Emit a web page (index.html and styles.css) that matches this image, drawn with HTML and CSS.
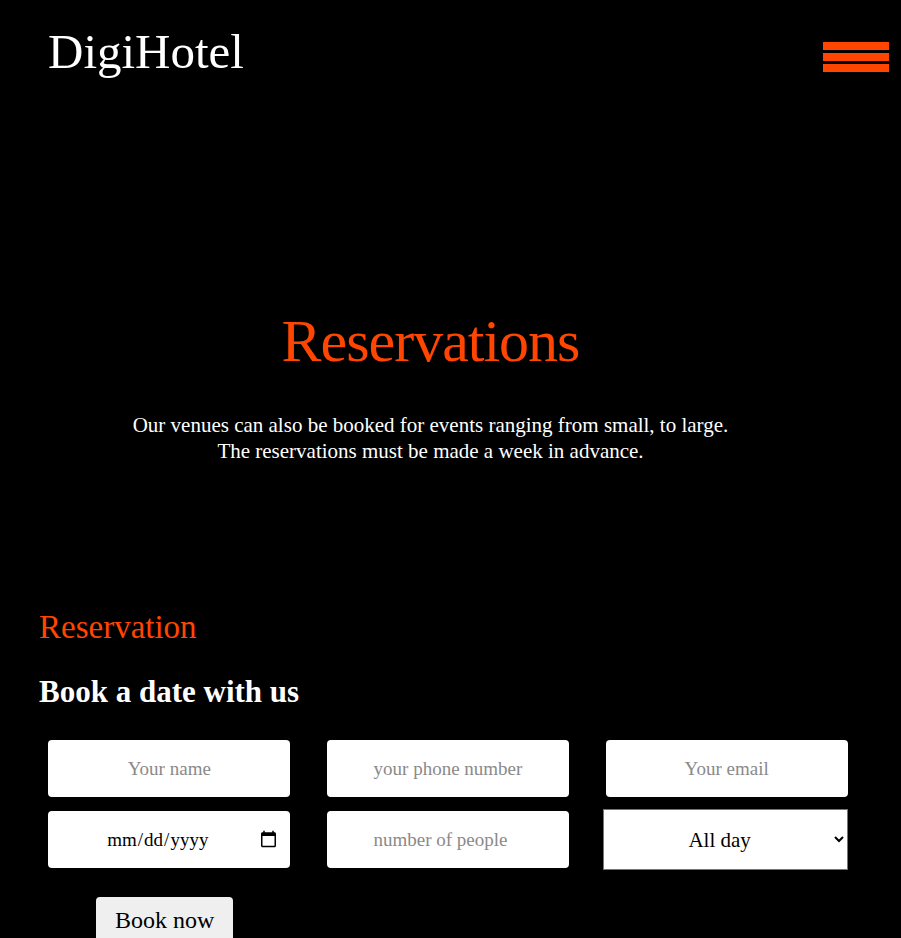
FILE: index.html
```html
<!DOCTYPE html>
<html lang="en">
<head>
<meta charset="utf-8">
<title>DigiHotel - Reservations</title>
<link rel="stylesheet" href="styles.css">
</head>
<body>
<header class="site-header">
  <div class="logo">DigiHotel</div>
  <button class="menu-toggle" aria-label="Menu">
    <span class="bar"></span>
    <span class="bar"></span>
    <span class="bar"></span>
  </button>
</header>

<section class="hero">
  <h1 class="hero-title">Reservations</h1>
  <p class="hero-text">Our venues can also be booked for events ranging from small, to large.<br>The reservations must be made a week in advance.</p>
</section>

<section class="reservation">
  <h2 class="section-label">Reservation</h2>
  <h3 class="section-title">Book a date with us</h3>
  <form class="booking-form">
    <div class="form-grid">
      <input class="field" type="text" placeholder="Your name">
      <input class="field" type="tel" placeholder="your phone number">
      <input class="field" type="email" placeholder="Your email">
      <input class="field" type="date">
      <input class="field" type="number" placeholder="number of people">
      <select class="field field-select">
        <option>All day</option>
        <option>Morning</option>
        <option>Evening</option>
      </select>
    </div>
    <div class="form-actions">
      <button class="book-btn" type="button">Book now</button>
    </div>
  </form>
</section>
</body>
</html>
```

FILE: styles.css
```css
html, body {
  margin: 0;
  padding: 0;
  background: #000;
  color: #fff;
  font-family: "Liberation Serif", "Times New Roman", serif;
}

.site-header {
  display: flex;
  align-items: flex-start;
  padding: 28px 12px 0 48px;
  height: 47px;
}

.logo {
  font-size: 49px;
  line-height: 48px;
  color: #fff;
}

.menu-toggle {
  margin-left: auto;
  margin-top: 14px;
  padding: 0;
  border: 0;
  background: transparent;
  display: flex;
  flex-direction: column;
  gap: 3px;
  cursor: pointer;
}

.bar {
  display: block;
  width: 66px;
  height: 8px;
  background: #ff4500;
}

.hero {
  padding: 232px 40px 0 0;
  text-align: center;
}

.hero-title {
  margin: 0;
  font-size: 60px;
  line-height: 69px;
  font-weight: normal;
  letter-spacing: -1px;
  color: #ff4500;
}

.hero-text {
  margin: 36px 0 0;
  font-size: 21px;
  line-height: 26px;
  color: #fff;
}

.reservation {
  padding: 144px 36px 0 39px;
}

.section-label {
  margin: 0;
  font-size: 33px;
  line-height: 38px;
  font-weight: normal;
  color: #ff4500;
}

.section-title {
  margin: 28px 0 0;
  font-size: 31px;
  line-height: 36px;
  font-weight: bold;
  color: #fff;
}

.booking-form {
  margin: 30px 0 0 -9px;
  width: 836px;
}

.form-grid {
  display: grid;
  grid-template-columns: repeat(3, 1fr);
  row-gap: 14px;
  align-items: center;
  justify-items: center;
}

.field {
  box-sizing: border-box;
  width: 242px;
  height: 57px;
  border: 0;
  border-radius: 4px;
  background: #fff;
  color: #000;
  font-family: "Liberation Serif", "Times New Roman", serif;
  font-size: 19px;
  text-align: center;
  padding: 0 10px;
  outline: none;
}

.field::placeholder {
  color: #8a8a8a;
}

.field-select {
  width: 245px;
  height: 61px;
  margin: -2px 0 -2px -2px;
  border: 1px solid #767676;
  border-radius: 0;
  text-align-last: center;
  font-size: 21px;
}

.form-actions {
  margin-top: 29px;
  padding-left: 66px;
}

.book-btn {
  background: #efefef;
  color: #000;
  border: 0;
  border-radius: 4px;
  padding: 9px 19px 12px;
  font-family: "Liberation Serif", "Times New Roman", serif;
  font-size: 24px;
  line-height: 28px;
  cursor: pointer;
}
```
